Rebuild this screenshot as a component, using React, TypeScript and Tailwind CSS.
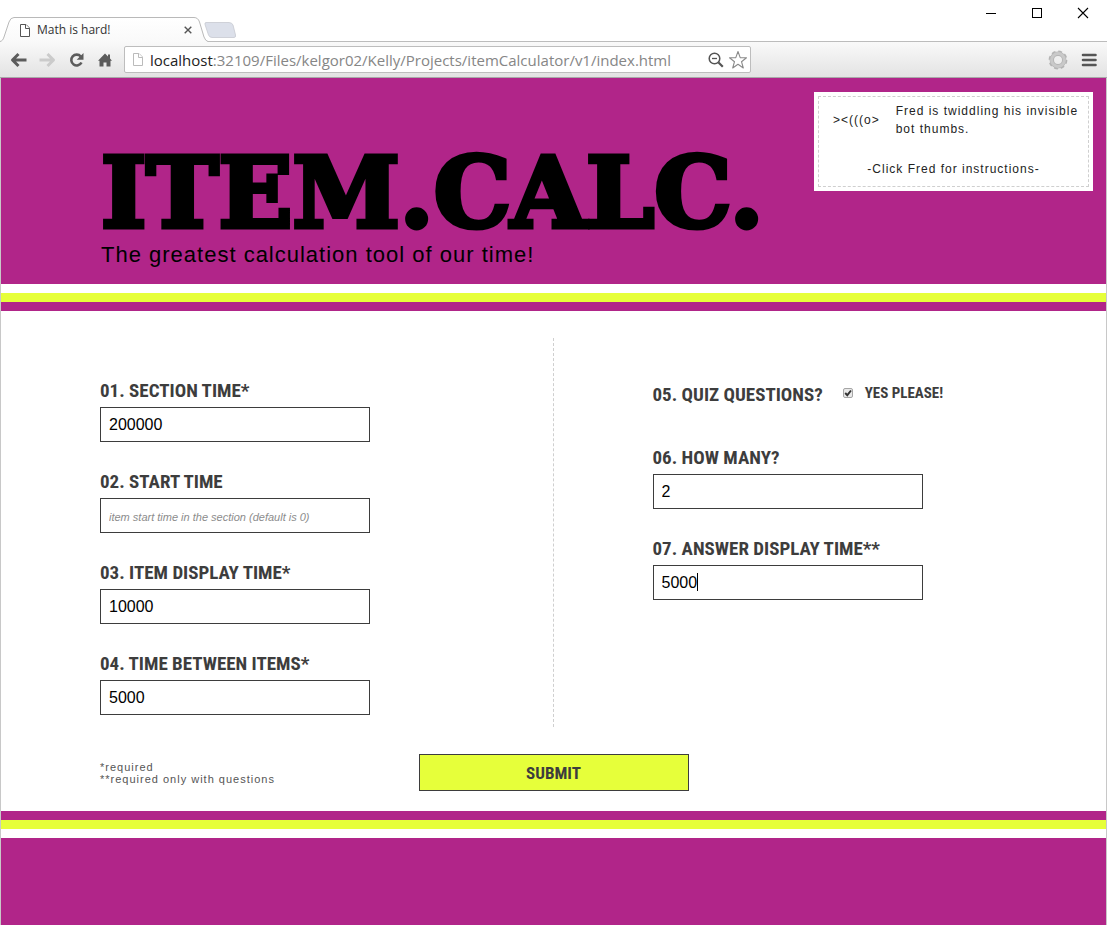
import { useState } from "react";

const display = "font-['Roboto_Condensed','Liberation_Sans_Narrow','Liberation_Sans',sans-serif] font-bold uppercase text-[#3d3d3d]";

type FieldProps = {
  id: string;
  label: string;
  initial?: string;
  placeholder?: string;
  caret?: boolean;
};

function Field({ id, label, initial = "", placeholder, caret = false }: FieldProps) {
  const [value, setValue] = useState(initial);
  return (
    <div className="flex flex-col gap-1">
      <label htmlFor={id} className={`${display} text-[19px] leading-6`}>
        {label}
      </label>
      <div className="relative w-[270px]">
        <input
          id={id}
          type="text"
          value={value}
          placeholder={placeholder}
          onChange={(event) => setValue(event.target.value)}
          className="block h-[35px] w-full border border-[#3d3d3d] bg-white px-2 text-[16px] text-black outline-none placeholder:text-[11px] placeholder:italic placeholder:text-[#8c8c8c]"
        />
        {caret && <span className="absolute top-2 left-11 h-[18px] w-px bg-black" />}
      </div>
    </div>
  );
}

function PageIcon({ className, stroke }: { className: string; stroke: string }) {
  return (
    <svg viewBox="0 0 12 15" className={className} fill="#fff" stroke={stroke} aria-hidden="true">
      <path d="M1.500 1.500H7L10.500 5V13.500H1.500Z" />
      <path d="M6.500 1.500V5.500H10.500" />
    </svg>
  );
}

function TabStrip() {
  return (
    <div className="flex h-[41px] items-end justify-between bg-white">
      <div className="flex h-6 items-start">
        <div className="relative h-6 w-[208px]">
          <svg viewBox="0 0 208 25" className="absolute top-0 left-0 z-10 h-[25px] w-[208px]" aria-hidden="true">
            <defs>
              <linearGradient id="tab" x1="0" y1="0" x2="0" y2="1">
                <stop offset="0" stopColor="#ffffff" />
                <stop offset="1" stopColor="#f9f9f9" />
              </linearGradient>
            </defs>
            <path d="M0 25V24.500C2 24 3 23 4 20L9 5Q10.500 .5 14 .5H194Q198 .5 199.500 5L204 20Q205.500 24 208 24.500V25Z" fill="url(#tab)" />
            <path d="M0 24.500C2 24 3 23 4 20L9 5Q10.500 .5 14 .5H194Q198 .5 199.500 5L204 20Q205.500 24 208 24.500" fill="none" stroke="#b9b9b9" />
          </svg>
          <div className="relative z-20 flex h-[26px] items-center gap-[6px] pr-[15px] pl-[19px]">
            <PageIcon className="h-[15px] w-3" stroke="#555" />
            <span className="flex-1 font-['Open_Sans','Noto_Sans',sans-serif] text-[12px] leading-4 text-[#333]">Math is hard!</span>
            <button type="button" aria-label="Close tab" className="flex h-4 w-[10px] items-center justify-center">
              <svg viewBox="0 0 8 8" className="h-2 w-2" stroke="#555" strokeWidth="1.4" aria-hidden="true">
                <path d="M.7.7l6.600 6.600M7.300.7L.7 7.300" />
              </svg>
            </button>
          </div>
        </div>
        <button type="button" aria-label="New tab" className="-ml-1 pt-[5px]">
          <svg viewBox="0 0 33 16" className="h-4 w-[33px]" aria-hidden="true">
            <path d="M2 .5H25Q28 .5 29 3L31.500 13Q32 15.500 30 15.500H8Q5.500 15.500 4.500 13L1 2.500Q.5.5 2 .5Z" fill="#dce0ea" stroke="#c6c9d0" strokeWidth=".8" />
          </svg>
        </button>
      </div>
      <div className="flex h-[41px] items-start gap-[34px] pt-[7px] pr-[18px]">
        <button type="button" aria-label="Minimize">
          <svg viewBox="0 0 12 12" className="h-3 w-3" shapeRendering="crispEdges" aria-hidden="true">
            <path d="M1 6.500H11" stroke="#000" />
          </svg>
        </button>
        <button type="button" aria-label="Maximize">
          <svg viewBox="0 0 12 12" className="h-3 w-3" shapeRendering="crispEdges" aria-hidden="true">
            <path d="M1.500 1.500H10.500V10.500H1.500Z" fill="none" stroke="#000" />
          </svg>
        </button>
        <button type="button" aria-label="Close">
          <svg viewBox="0 0 12 12" className="h-3 w-3" aria-hidden="true">
            <path d="M1 1L11 11M11 1L1 11" stroke="#000" strokeWidth="1.100" />
          </svg>
        </button>
      </div>
    </div>
  );
}

function Toolbar() {
  return (
    <div className="flex h-[37px] items-center border-t border-b border-t-[#bcbcbc] border-b-[#a9a9a9] bg-linear-to-b from-[#f9f9f9] to-[#e3e3e3] pr-[9px] pl-[10px]">
      <div className="flex items-center gap-3">
        <button type="button" aria-label="Back">
          <svg viewBox="0 0 17 16" className="h-4 w-[17px]" fill="none" stroke="#5c5c5c" strokeWidth="3" strokeLinejoin="round" aria-hidden="true">
            <path d="M3 8H16.500M8.500 2L2.500 8L8.500 14" />
          </svg>
        </button>
        <button type="button" aria-label="Forward">
          <svg viewBox="0 0 17 16" className="h-4 w-[17px]" fill="none" stroke="#cbcbcb" strokeWidth="3" strokeLinejoin="round" aria-hidden="true">
            <path d="M.5 8H14M8.500 2L14.500 8L8.500 14" />
          </svg>
        </button>
        <button type="button" aria-label="Reload">
          <svg viewBox="0 0 17 16" className="h-4 w-[17px]" aria-hidden="true">
            <path d="M12.800 4.500A5.400 5.400 0 1 0 13.500 10.500" fill="none" stroke="#5c5c5c" strokeWidth="2.600" />
            <path d="M15.500 1V7.800H8.700Z" fill="#5c5c5c" />
          </svg>
        </button>
        <button type="button" aria-label="Home">
          <svg viewBox="0 0 16 16" className="h-4 w-4" fill="#5c5c5c" aria-hidden="true">
            <path d="M8 1.500L11 4.500V2.500H13V6.500L15 8.700H13.500V14.500H9.500V10.500H6.500V14.500H2.500V8.700H1Z" />
          </svg>
        </button>
      </div>
      <div className="ml-[11px] flex h-[27px] w-[627px] items-center rounded-[2px] border border-[#bdbdbd] bg-white pr-[2px] pl-[7px]">
        <PageIcon className="h-[15px] w-3 shrink-0" stroke="#bbb" />
        <div className="ml-[6px] flex-1 font-['Open_Sans','Noto_Sans',sans-serif] text-[15px] leading-5 whitespace-nowrap text-[#868686]">
          <span className="text-[#222]">localhost</span>:32109/Files/kelgor02/Kelly/Projects/itemCalculator/v1/index.html
        </div>
        <button type="button" aria-label="Zoom">
          <svg viewBox="0 0 16 16" className="h-4 w-4" fill="none" stroke="#555" aria-hidden="true">
            <circle cx="6.500" cy="6.500" r="5.300" strokeWidth="1.500" />
            <path d="M4 6.500H9" strokeWidth="1.300" />
            <path d="M10.500 10.500L14.800 14.800" strokeWidth="2.200" />
          </svg>
        </button>
        <button type="button" aria-label="Bookmark this page" className="ml-1">
          <svg viewBox="0 0 20 20" className="h-5 w-5" fill="#fff" stroke="#8a8a8a" strokeWidth="1.100" strokeLinejoin="round" aria-hidden="true">
            <path d="M10 1.500L12.200 7.600L18.500 7.800L13.500 11.700L15.300 18L10 14.300L4.700 18L6.500 11.700L1.500 7.800L7.800 7.600Z" />
          </svg>
        </button>
      </div>
      <div className="ml-auto flex items-center gap-[13px]">
        <button type="button" aria-label="Extension">
          <svg viewBox="0 0 20 20" className="h-5 w-5" aria-hidden="true">
            <circle cx="10" cy="10" r="8.400" fill="none" stroke="#b4b4b4" strokeWidth="2" strokeDasharray="3.800 2.798" />
            <circle cx="10" cy="10" r="6.200" fill="none" stroke="#b4b4b4" strokeWidth="4.400" />
            <circle cx="10" cy="10" r="6.400" fill="none" stroke="#c9c9c9" strokeWidth="3" />
          </svg>
        </button>
        <button type="button" aria-label="Menu">
          <svg viewBox="0 0 17 14" className="h-[14px] w-[17px]" stroke="#555" strokeWidth="2.600" strokeLinecap="round" aria-hidden="true">
            <path d="M2 2H14.500M2 7H14.500M2 12H14.500" />
          </svg>
        </button>
      </div>
    </div>
  );
}

function FredPanel() {
  return (
    <aside className="w-[279px] shrink-0 bg-white p-1 text-[12px] leading-[18px] tracking-[1px] text-[#222]">
      <div className="flex h-[91px] flex-col justify-between border border-dashed border-[#cfcfcf] pt-[5px] pb-2">
        <div className="flex items-start gap-4 pl-[14px]">
          <button type="button" aria-label="Fred" className="pt-[9px] tracking-[1px]">
            {"><(((o>"}
          </button>
          <p className="flex-1">
            Fred is twiddling his invisible
            <br />
            bot thumbs.
          </p>
        </div>
        <p className="text-center">-Click Fred for instructions-</p>
      </div>
    </aside>
  );
}

export default function App() {
  const [quiz, setQuiz] = useState(true);
  return (
    <div className="flex min-h-screen flex-col bg-white font-['Liberation_Sans',Arial,sans-serif]">
      <TabStrip />
      <Toolbar />
      <div className="flex flex-1 flex-col border-x border-[#c8c8c8]">
        <header className="flex h-[206px] items-start justify-between bg-[#b12589] pt-[14px] pr-[13px] pl-[100px]">
          <div className="pt-[53px] text-black">
            <h1 className="font-['DejaVu_Serif',serif] text-[97px] leading-24 font-bold [-webkit-text-stroke:5px_black]">ITEM.CALC.</h1>
            <p className="text-[22px] leading-7 tracking-[1px]">The greatest calculation tool of our time!</p>
          </div>
          <FredPanel />
        </header>
        <div className="mt-[9px] h-[9px] bg-[#e6ff3a]" />
        <div className="h-[9px] bg-[#b12589]" />

        <form className="pt-[27px] pb-5" onSubmit={(event) => event.preventDefault()}>
          <div className="grid grid-cols-2">
            <div className="flex h-[389px] flex-col gap-7 border-r border-dashed border-[#cfcfcf] pt-[41px] pl-[99px]">
              <Field id="section-time" label="01. Section Time*" initial="200000" />
              <Field id="start-time" label="02. Start Time" placeholder="item start time in the section (default is 0)" />
              <Field id="display-time" label="03. Item Display Time*" initial="10000" />
              <Field id="between-time" label="04. Time Between Items*" initial="5000" />
            </div>
            <div className="flex flex-col gap-7 pt-[45px] pl-[99px]">
              <div className="mb-[11px] flex items-center gap-5">
                <span className={`${display} text-[19px] leading-6`}>05. Quiz Questions?</span>
                <div className="flex items-center gap-3 pb-1">
                  <span className="relative flex">
                    <input
                      id="quiz"
                      type="checkbox"
                      checked={quiz}
                      onChange={(event) => setQuiz(event.target.checked)}
                      className="h-[10px] w-[10px] appearance-none rounded-[2px] border border-[#a5a5a5] bg-[#e9e9e9]"
                    />
                    {quiz && (
                      <svg viewBox="0 0 10 10" className="pointer-events-none absolute top-0 left-0 h-[10px] w-[10px]" fill="none" stroke="#333" strokeWidth="1.900" aria-hidden="true">
                        <path d="M2.200 5L4.300 7.200L8 2.500" />
                      </svg>
                    )}
                  </span>
                  <label htmlFor="quiz" className={`${display} text-[15px] leading-5`}>
                    Yes Please!
                  </label>
                </div>
              </div>
              <Field id="how-many" label="06. How Many?" initial="2" />
              <Field id="answer-time" label="07. Answer Display Time**" initial="5000" caret />
            </div>
          </div>
          <div className="mt-[27px] grid grid-cols-[1fr_270px_1fr] items-center">
            <p className="pl-[99px] text-[11px] leading-3 tracking-[1px] text-[#555]">
              *required
              <br />
              **required only with questions
            </p>
            <button type="submit" className={`${display} h-[37px] border border-[#3d3d3d] bg-[#e6ff3a] text-[17px] leading-6`}>
              Submit
            </button>
          </div>
        </form>

        <div className="h-[9px] bg-[#b12589]" />
        <div className="h-[9px] bg-[#e6ff3a]" />
        <footer className="mt-[9px] min-h-[87px] flex-1 bg-[#b12589]" />
      </div>
    </div>
  );
}
